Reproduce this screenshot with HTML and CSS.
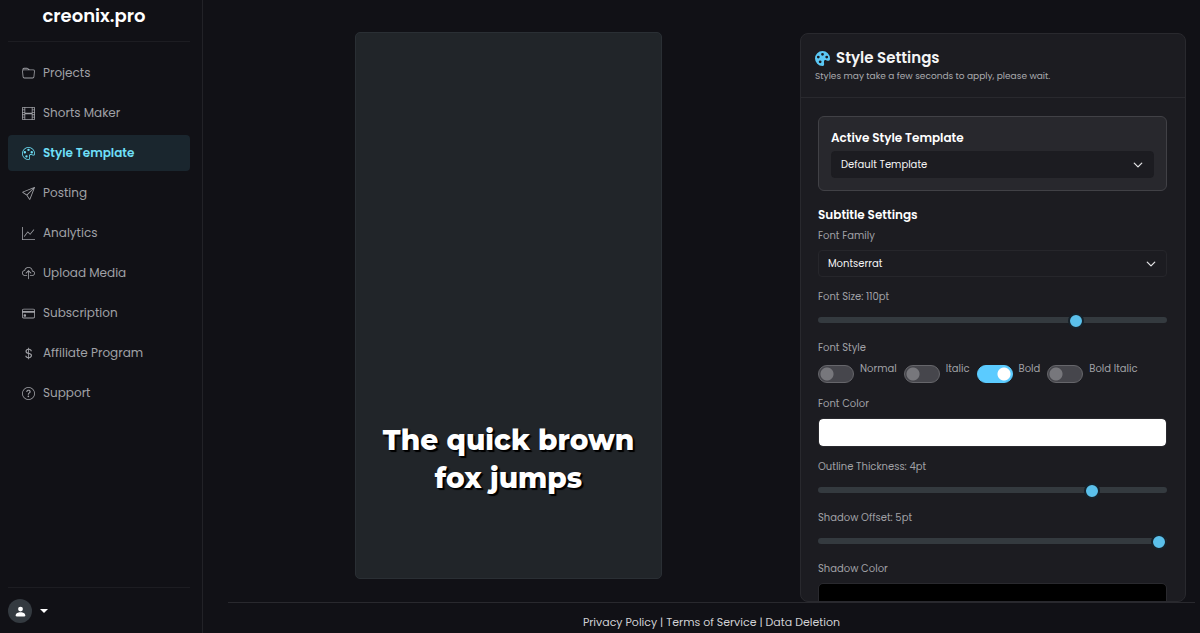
FILE: index.html
```html
<!DOCTYPE html>
<html lang="en">
<head>
  <meta charset="UTF-8" />
  <meta name="viewport" content="width=device-width, initial-scale=1" />
  <title>creonix.pro - Style Template</title>
  <link rel="stylesheet" href="styles.css">
</head>
<body>
  <aside class="sidebar">
    <a href="#" class="brand">creonix.pro</a>
    <nav class="nav">
      <a href="#" class="nav-link">
        <svg class="icon" viewBox="0 0 16 16"><path d="M.54 3.87.5 3a2 2 0 0 1 2-2h3.672a2 2 0 0 1 1.414.586l.828.828A2 2 0 0 0 9.828 3h3.982a2 2 0 0 1 1.992 2.181l-.637 7A2 2 0 0 1 13.174 14H2.826a2 2 0 0 1-1.991-1.819l-.637-7a2 2 0 0 1 .342-1.31zM2.19 4a1 1 0 0 0-.996 1.09l.637 7a1 1 0 0 0 .995.91h10.348a1 1 0 0 0 .995-.91l.637-7A1 1 0 0 0 13.81 4zm4.69-1.707A1 1 0 0 0 6.172 2H2.5a1 1 0 0 0-1 .981l.006.139q.323-.119.684-.12h5.396z"/></svg>
        Projects
      </a>
      <a href="#" class="nav-link">
        <svg class="icon" viewBox="0 0 16 16"><path d="M0 1a1 1 0 0 1 1-1h14a1 1 0 0 1 1 1v14a1 1 0 0 1-1 1H1a1 1 0 0 1-1-1zm4 0v6h8V1zm8 8H4v6h8zM1 1v2h2V1zm2 3H1v2h2zM1 7v2h2V7zm2 3H1v2h2zm-2 3v2h2v-2zM15 1h-2v2h2zm-2 3v2h2V4zm2 3h-2v2h2zm-2 3v2h2v-2zm2 3h-2v2h2z"/></svg>
        Shorts Maker
      </a>
      <a href="#" class="nav-link active">
        <svg class="icon" viewBox="0 0 16 16"><path d="M8 5a1.5 1.5 0 1 0 0-3 1.5 1.5 0 0 0 0 3m4 3a1.5 1.5 0 1 0 0-3 1.5 1.5 0 0 0 0 3M5 6.5a1.5 1.5 0 1 1-3 0 1.5 1.5 0 0 1 3 0m.5 6.5a1.5 1.5 0 1 0 0-3 1.5 1.5 0 0 0 0 3"/><path d="M16 8c0 3.15-1.866 2.585-3.567 2.07C11.42 9.763 10.465 9.473 10 10c-.603.683-.475 1.819-.351 2.92C9.826 14.495 9.996 16 8 16a8 8 0 1 1 8-8m-8 7c.611 0 .654-.171.655-.176.078-.146.124-.464.07-1.119-.014-.168-.037-.37-.061-.591-.052-.464-.112-1.005-.118-1.462-.01-.707.083-1.61.704-2.314.369-.417.845-.578 1.272-.618.404-.038.812.026 1.16.104.343.077.702.186 1.025.284l.028.008c.346.105.658.199.953.266.653.148.904.083.991.024C14.717 9.38 15 9.161 15 8a7 7 0 1 0-7 7"/></svg>
        Style Template
      </a>
      <a href="#" class="nav-link">
        <svg class="icon" viewBox="0 0 16 16"><path d="M15.854.146a.5.5 0 0 1 .11.54l-5.819 14.547a.75.75 0 0 1-1.329.124l-3.178-4.995L.643 7.184a.75.75 0 0 1 .124-1.33L15.314.037a.5.5 0 0 1 .54.11ZM6.636 10.07l2.761 4.338L14.13 2.576zm6.787-8.201L1.591 6.602l4.339 2.76z"/></svg>
        Posting
      </a>
      <a href="#" class="nav-link">
        <svg class="icon" viewBox="0 0 16 16"><path d="M0 0h1v15h15v1H0zm14.817 3.113a.5.5 0 0 1 .07.704l-4.5 5.5a.5.5 0 0 1-.74.037L7.06 6.767l-3.656 5.027a.5.5 0 0 1-.808-.588l4-5.5a.5.5 0 0 1 .758-.06l2.609 2.61 4.15-5.073a.5.5 0 0 1 .704-.07"/></svg>
        Analytics
      </a>
      <a href="#" class="nav-link">
        <svg class="icon" viewBox="0 0 16 16"><path d="M4.406 1.342A5.53 5.53 0 0 1 8 0c2.69 0 4.923 2 5.166 4.579C14.758 4.804 16 6.137 16 7.773 16 9.569 14.502 11 12.687 11H10a.5.5 0 0 1 0-1h2.688C13.979 10 15 8.988 15 7.773c0-1.216-1.02-2.228-2.313-2.228h-.5v-.5C12.188 2.825 10.328 1 8 1a4.53 4.53 0 0 0-2.941 1.1c-.757.652-1.153 1.438-1.153 2.055v.448l-.445.049C2.064 4.805 1 5.952 1 7.318 1 8.785 2.23 10 3.781 10H6a.5.5 0 0 1 0 1H3.781C1.708 11 0 9.366 0 7.318c0-1.763 1.266-3.223 2.942-3.593.143-.863.698-1.723 1.464-2.383"/><path d="M7.646 4.146a.5.5 0 0 1 .708 0l3 3a.5.5 0 0 1-.708.708L8.5 5.707V14.5a.5.5 0 0 1-1 0V5.707L5.354 7.854a.5.5 0 1 1-.708-.708z"/></svg>
        Upload Media
      </a>
      <a href="#" class="nav-link">
        <svg class="icon" viewBox="0 0 16 16"><path d="M0 4a2 2 0 0 1 2-2h12a2 2 0 0 1 2 2v8a2 2 0 0 1-2 2H2a2 2 0 0 1-2-2zm2-1a1 1 0 0 0-1 1v1h14V4a1 1 0 0 0-1-1zm13 4H1v5a1 1 0 0 0 1 1h12a1 1 0 0 0 1-1z"/><path d="M2 10a1 1 0 0 1 1-1h1a1 1 0 0 1 1 1v1a1 1 0 0 1-1 1H3a1 1 0 0 1-1-1z"/></svg>
        Subscription
      </a>
      <a href="#" class="nav-link">
        <svg class="icon" viewBox="0 0 16 16"><path d="M4 10.781c.148 1.667 1.513 2.85 3.591 3.003V15h1.043v-1.216c2.27-.179 3.678-1.438 3.678-3.3 0-1.59-.947-2.51-2.956-3.028l-.722-.187V3.467c1.122.11 1.879.714 2.07 1.616h1.47c-.166-1.6-1.54-2.748-3.54-2.875V1H7.591v1.233c-1.939.23-3.27 1.472-3.27 3.156 0 1.454.966 2.483 2.661 2.917l.61.162v4.031c-1.149-.17-1.94-.8-2.131-1.718zm3.391-3.836c-1.043-.263-1.6-.825-1.6-1.616 0-.944.704-1.641 1.8-1.828v3.495l-.2-.05zm1.591 1.872c1.287.323 1.852.859 1.852 1.769 0 1.097-.826 1.828-2.2 1.939V8.73z"/></svg>
        Affiliate Program
      </a>
      <a href="#" class="nav-link">
        <svg class="icon" viewBox="0 0 16 16"><path d="M8 15A7 7 0 1 1 8 1a7 7 0 0 1 0 14m0 1A8 8 0 1 0 8 0a8 8 0 0 0 0 16"/><path d="M5.255 5.786a.237.237 0 0 0 .241.247h.825c.138 0 .248-.113.266-.25.09-.656.54-1.134 1.342-1.134.686 0 1.314.343 1.314 1.168 0 .635-.374.927-.965 1.371-.673.489-1.206 1.06-1.168 1.987l.003.217a.25.25 0 0 0 .25.246h.811a.25.25 0 0 0 .25-.25v-.105c0-.718.273-.927 1.01-1.486.609-.463 1.244-.977 1.244-2.056 0-1.511-1.276-2.241-2.673-2.241-1.267 0-2.655.59-2.75 2.286m1.557 5.763c0 .533.425.927 1.01.927.609 0 1.028-.394 1.028-.927 0-.552-.42-.94-1.029-.94-.584 0-1.009.388-1.009.94"/></svg>
        Support
      </a>
    </nav>
    <div class="account">
      <button type="button" class="account-btn" aria-label="Account menu">
        <span class="avatar">
          <svg class="icon" viewBox="0 0 16 16"><path d="M3 14s-1 0-1-1 1-4 6-4 6 3 6 4-1 1-1 1zm5-6a3 3 0 1 0 0-6 3 3 0 0 0 0 6"/></svg>
        </span>
        <span class="caret"></span>
      </button>
    </div>
  </aside>

  <div class="page">
    <main class="workspace">
      <section class="preview-col">
        <div class="preview">
          <p class="subtitle">The quick brown<br>fox jumps</p>
        </div>
      </section>

      <section class="panel">
        <header class="panel-header">
          <h1 class="panel-title">
            <svg class="title-icon" viewBox="0 0 16 16"><path d="M12.433 10.07C14.133 10.585 16 11.15 16 8a8 8 0 1 0-8 8c1.996 0 1.826-1.504 1.649-3.08-.124-1.101-.252-2.237.351-2.92.465-.527 1.42-.237 2.433.07M8 5a1.5 1.5 0 1 1 0-3 1.5 1.5 0 0 1 0 3m4.5 3a1.5 1.5 0 1 1 0-3 1.5 1.5 0 0 1 0 3M5 6.5a1.5 1.5 0 1 1-3 0 1.5 1.5 0 0 1 3 0m.5 6.5a1.5 1.5 0 1 1 0-3 1.5 1.5 0 0 1 0 3"/></svg>
            Style Settings
          </h1>
          <p class="panel-note">Styles may take a few seconds to apply, please wait.</p>
        </header>

        <form class="panel-body">
          <div class="template-card">
            <label class="heading" for="template">Active Style Template</label>
            <select class="select select-plain" id="template">
              <option>Default Template</option>
            </select>
          </div>

          <h2 class="heading">Subtitle Settings</h2>

          <div class="field">
            <label for="fontFamily">Font Family</label>
            <select class="select" id="fontFamily">
              <option>Montserrat</option>
            </select>
          </div>

          <div class="field">
            <label for="fontSize">Font Size: 110pt</label>
            <input type="range" class="range" id="fontSize" min="20" max="140" value="110">
          </div>

          <fieldset class="field">
            <legend>Font Style</legend>
            <div class="switches">
              <div class="switch"><input type="checkbox" id="styleNormal"><label for="styleNormal">Normal</label></div>
              <div class="switch"><input type="checkbox" id="styleItalic"><label for="styleItalic">Italic</label></div>
              <div class="switch"><input type="checkbox" id="styleBold" checked><label for="styleBold">Bold</label></div>
              <div class="switch"><input type="checkbox" id="styleBoldItalic"><label for="styleBoldItalic">Bold Italic</label></div>
            </div>
          </fieldset>

          <div class="field">
            <label for="fontColor">Font Color</label>
            <input type="color" class="color" id="fontColor" value="#ffffff">
          </div>

          <div class="field">
            <label for="outline">Outline Thickness: 4pt</label>
            <input type="range" class="range" id="outline" min="0" max="5" value="4">
          </div>

          <div class="field">
            <label for="shadowOffset">Shadow Offset: 5pt</label>
            <input type="range" class="range" id="shadowOffset" min="0" max="5" value="5">
          </div>

          <div class="field">
            <label for="shadowColor">Shadow Color</label>
            <input type="color" class="color" id="shadowColor" value="#000000">
          </div>
        </form>
      </section>
    </main>

    <footer class="footer">
      <a href="#">Privacy Policy</a> | <a href="#">Terms of Service</a> | <a href="#">Data Deletion</a>
    </footer>
  </div>
</body>
</html>
```

FILE: styles.css
```css
* {
  box-sizing: border-box;
}

body {
  margin: 0;
  height: 100vh;
  display: flex;
  overflow: hidden;
  background: #111116;
  color: #fff;
  font-family: Poppins, Inter, sans-serif;
  font-size: 12px;
  line-height: 16px;
}

a {
  color: inherit;
  text-decoration: none;
}

h1, h2, p {
  margin: 0;
}

/* Sidebar */
.sidebar {
  width: 203px;
  flex-shrink: 0;
  display: flex;
  flex-direction: column;
  padding: 0 12px 0 8px;
  background: #111116;
  border-right: 1px solid #222227;
}

.brand {
  padding: 4px 10px 13px 0;
  font-size: 18px;
  line-height: 24px;
  font-weight: 600;
  text-align: center;
  border-bottom: 1px solid #1d1d22;
}

.nav {
  flex: 1;
  display: flex;
  flex-direction: column;
  gap: 4px;
  padding-top: 13px;
}

.nav-link {
  display: flex;
  align-items: center;
  gap: 8px;
  height: 36px;
  padding: 0 14px;
  border-radius: 4px;
  color: #a0a1a6;
}

.nav-link.active {
  background: #1a262e;
  color: #6edff6;
  font-weight: 600;
}

.icon {
  width: 13px;
  height: 13px;
  flex-shrink: 0;
  fill: currentColor;
}

.account {
  padding: 11px 0 10px;
  border-top: 1px solid #1d1d22;
}

.account-btn {
  display: flex;
  align-items: center;
  gap: 8px;
  padding: 0;
  border: none;
  background: none;
  color: #fff;
  cursor: pointer;
}

.avatar {
  display: flex;
  align-items: center;
  justify-content: center;
  width: 24px;
  height: 24px;
  border-radius: 50%;
  background: #343a40;
}

.caret {
  border: 4px solid transparent;
  border-top-color: #fff;
  border-bottom: 0;
}

/* Page */
.page {
  flex: 1;
  min-width: 0;
  display: flex;
  flex-direction: column;
}

.workspace {
  flex: 1;
  min-height: 0;
  display: flex;
  padding: 32px 14px 0;
}

.preview-col {
  flex: 1;
  display: flex;
  justify-content: center;
  padding-bottom: 23px;
}

.preview {
  height: 100%;
  aspect-ratio: 9 / 16;
  display: flex;
  align-items: flex-end;
  justify-content: center;
  padding-bottom: 81px;
  border: 1px solid #2a2f34;
  border-radius: 5px;
  background: #212529;
}

.subtitle {
  font-family: Montserrat, Inter, sans-serif;
  font-size: 28px;
  line-height: 38px;
  font-weight: 800;
  text-align: center;
  text-shadow: 1px 1px 1px #000, 2px 2px 1px #000;
}

/* Settings panel */
.panel {
  width: 386px;
  margin-top: 1px;
  display: flex;
  flex-direction: column;
  overflow: hidden;
  border: 1px solid #29292e;
  border-radius: 8px;
  background: #1c1c21;
}

.panel-header {
  padding: 13px 14px 14px;
  border-bottom: 1px solid #29292e;
}

.panel-title {
  display: flex;
  align-items: center;
  gap: 6px;
  color: #f4f4f5;
  font-size: 15px;
  line-height: 22px;
  font-weight: 600;
}

.title-icon {
  width: 15px;
  height: 15px;
  fill: #5bc8f5;
}

.panel-note {
  font-size: 9px;
  line-height: 14px;
  color: #a9aaae;
}

.panel-body {
  flex: 1;
  min-height: 0;
  overflow: hidden;
  padding: 18px 18px 0 17px;
  font-size: 10px;
}

.heading {
  display: block;
  margin-bottom: 4px;
  font-size: 12px;
  line-height: 18px;
  font-weight: 600;
}

.template-card {
  margin-bottom: 15px;
  padding: 12px;
  border: 1px solid #414146;
  border-radius: 6px;
  background: #28282d;
}

.field {
  margin: 0 0 12px;
  padding: 0;
  border: none;
}

.field > label,
.field > legend {
  display: block;
  margin-bottom: 6px;
  padding: 0;
  color: #a0a1a6;
}

.select {
  display: block;
  width: 100%;
  height: 27px;
  padding: 0 9px;
  border: 1px solid #26262b;
  border-radius: 4px;
  background: #1c1c21 url("data:image/svg+xml,%3Csvg xmlns='http://www.w3.org/2000/svg' viewBox='0 0 16 16'%3E%3Cpath fill='none' stroke='%23e4e4e6' stroke-width='2' stroke-linecap='round' stroke-linejoin='round' d='m2 5 6 6 6-6'/%3E%3C/svg%3E") no-repeat right 10px center / 10px 10px;
  color: #f4f4f5;
  font-family: inherit;
  font-size: 10px;
  appearance: none;
}

.select-plain {
  border-color: #1c1c21;
}

.range {
  display: block;
  width: 100%;
  height: 17px;
  margin: 0;
  background: none;
  appearance: none;
}

.range::-webkit-slider-runnable-track {
  height: 6px;
  border-radius: 3px;
  background: #343a3f;
}

.range::-webkit-slider-thumb {
  width: 16px;
  height: 16px;
  margin-top: -4px;
  border: 2px solid #16222b;
  border-radius: 50%;
  background: #5bc0eb;
  appearance: none;
}

.switches {
  display: flex;
  gap: 7px;
  height: 22px;
}

.switch {
  display: flex;
  align-items: flex-start;
  gap: 6px;
  color: #a0a1a6;
  line-height: 14px;
}

.switch input {
  width: 36px;
  height: 18px;
  margin: 3px 0 0;
  border: 1px solid #66666b;
  border-radius: 9px;
  background: #46464c radial-gradient(circle at 8px 8px, #77777c 6px, transparent 7px);
  appearance: none;
}

.switch input:checked {
  border-color: #5bcbff;
  background: #5bcbff radial-gradient(circle at 26px 8px, #fff 6px, transparent 7px);
}

.color {
  display: block;
  width: 100%;
  height: 29px;
  padding: 0;
  border: 1px solid #29292e;
  border-radius: 5px;
  background: none;
  appearance: none;
}

.color::-webkit-color-swatch-wrapper {
  padding: 0;
}

.color::-webkit-color-swatch {
  border: none;
  border-radius: 4px;
}

/* Footer */
.footer {
  margin: 0 5px 0 25px;
  padding: 11px 0 3px;
  border-top: 1px solid #29292e;
  font-size: 11px;
  text-align: center;
  color: #d0d0d3;
}
```
